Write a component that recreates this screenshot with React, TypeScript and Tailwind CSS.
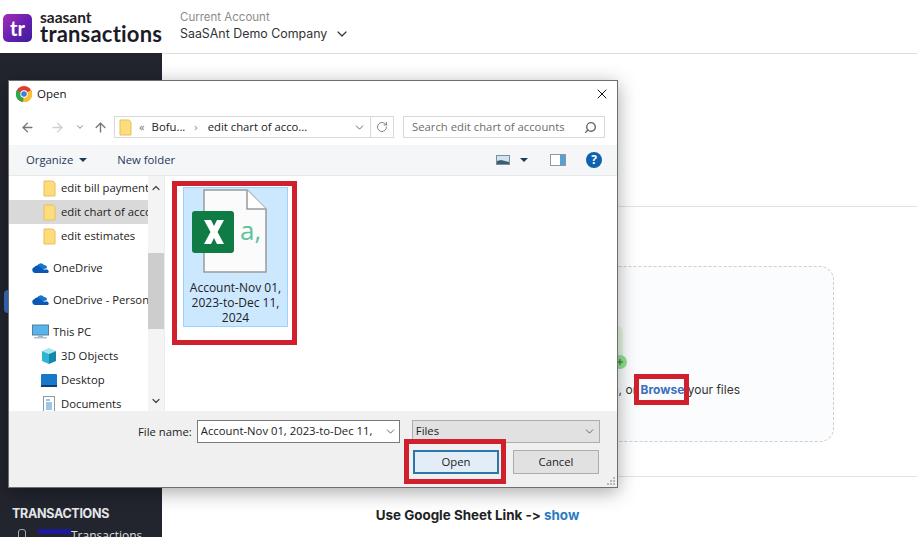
import { ChevronDown, ChevronUp, ArrowLeft, ArrowRight, ArrowUp, RotateCw, Search, X } from "lucide-react"

const font = "[font-family:'Open_Sans','Noto_Sans',sans-serif]"

function Folder() {
	return (
		<svg width="13" height="17" viewBox="0 0 13 17" className="shrink-0">
			<path d="M1 1h9l2 2v13H1z" fill="#fddc7c" stroke="#e8c05a" strokeWidth="1" />
		</svg>
	)
}

function Cloud() {
	return (
		<svg width="17" height="12" viewBox="0 0 17 12" className="shrink-0">
			<path d="M5 4a4 4 0 0 1 7-1 3 3 0 0 1 3 3l-6 2z" fill="#0f78d4" />
			<path d="M3 11a3 3 0 0 1-.5-5.900a3 3 0 0 1 5-.6l4 3h3a2 2 0 0 1 1.500 3.500z" fill="#0a58b0" />
		</svg>
	)
}

function PcIcon() {
	return (
		<svg width="17" height="16" viewBox="0 0 17 16" className="shrink-0">
			<rect x="0.500" y="1" width="16" height="10" fill="#58b4ec" stroke="#5c7c94" />
			<rect x="6" y="11" width="5" height="2" fill="#9fb4c4" />
			<rect x="2" y="13" width="13" height="1.500" fill="#b4c0ca" />
		</svg>
	)
}

function CubeIcon() {
	return (
		<svg width="16" height="16" viewBox="0 0 16 16" className="shrink-0">
			<path d="M8 0l7 3-7 3-7-3z" fill="#a6e4f2" />
			<path d="M1 3l7 3v10l-7-3z" fill="#2fb4d4" />
			<path d="M15 3l-7 3v10l7-3z" fill="#1587a8" />
		</svg>
	)
}

function DesktopIcon() {
	return (
		<svg width="16" height="13" viewBox="0 0 16 13" className="shrink-0">
			<rect width="16" height="13" rx="1" fill="#1979c9" />
			<rect y="11" width="16" height="2" fill="#0e3f73" />
		</svg>
	)
}

function DocsIcon() {
	return (
		<svg width="12" height="16" viewBox="0 0 12 16" className="shrink-0">
			<rect x="0.500" y="0.500" width="11" height="15" fill="#fff" stroke="#8a9aa8" />
			<path d="M3 4h4M3 7h6M3 9h6M3 11h6M3 13h6" stroke="#3f8fc9" />
		</svg>
	)
}

function ChromeIcon() {
	return (
		<svg width="16" height="16" viewBox="0 0 16 16" className="shrink-0">
			<circle cx="8" cy="8" r="8" fill="#e33b2e" />
			<path d="M8 8L1 4a8 8 0 0 0 6 12z" fill="#2fa84f" />
			<path d="M8 8l7-4a8 8 0 0 1-8 12z" fill="#fbc02d" />
			<circle cx="8" cy="8" r="3.700" fill="#fff" />
			<circle cx="8" cy="8" r="2.800" fill="#3f7fe0" />
		</svg>
	)
}

function FileTile() {
	return (
		<div className="w-[105px] h-[140px] bg-[#cce8ff] border border-[#99d1ff] flex flex-col items-center relative">
			<svg width="103" height="90" viewBox="0 0 103 90" className="mt-[1px] shrink-0">
				<path d="M20 1h43l19 19v63H20z" fill="#fbfbfb" stroke="#9a9a9a" strokeWidth="1.500" />
				<path d="M63 1v19h19" fill="#fff" stroke="#9a9a9a" strokeWidth="1.500" />
				<rect x="8" y="22" width="42" height="42" rx="3" fill="#107c45" />
				<path d="M20 31h7l3 6 3-6h7l-6.500 12L40 55h-7l-3-6-3 6h-7l6.500-12z" fill="#fff" />
				<text x="56" y="51" fontSize="26" fill="#5fc29c" fontFamily="Open Sans, sans-serif">a,</text>
			</svg>
			<div className="text-[12px] leading-[15px] text-center text-[#222] mt-[1px] whitespace-nowrap">
				Account-Nov 01,
				<br />
				2023-to-Dec 11,
				<br />
				2024
			</div>
		</div>
	)
}

function TreeRow({ icon, label, indent, selected, className }: { icon: React.ReactNode; label: string; indent: string; selected?: boolean; className?: string }) {
	return (
		<div className={`h-6 flex items-center whitespace-nowrap overflow-hidden text-[11.300px] text-[#222] ${indent} ${selected ? "bg-[#d9d9d9]" : ""} ${className ?? ""}`}>
			{icon}
			<span>{label}</span>
		</div>
	)
}

function OpenDialog() {
	return (
		<div className={`absolute left-[8px] top-[80px] w-[610px] h-[408px] bg-white border border-[#6e6e6e] shadow-[0_4px_18px_rgba(0,0,0,0.35)] flex flex-col ${font}`}>
			<div className="h-[26px] flex items-center pl-[7px] pr-[7px] shrink-0 text-[11.500px] text-[#111]">
				<ChromeIcon />
				<span className="ml-[5px]">Open</span>
				<X className="ml-auto w-[16px] h-[16px] text-black" strokeWidth={1.4} />
			</div>
			<div className="h-[22px] mt-[9px] flex items-center shrink-0 text-[11.300px] text-[#222]">
				<ArrowLeft className="ml-[11px] w-[15px] h-[15px] text-[#757575]" strokeWidth={2.2} />
				<ArrowRight className="ml-[15px] w-[15px] h-[15px] text-[#cfcfcf]" strokeWidth={2.2} />
				<ChevronDown className="ml-[10px] w-[10px] h-[10px] text-[#999]" strokeWidth={2.5} />
				<ArrowUp className="ml-[8px] w-[15px] h-[15px] text-[#757575]" strokeWidth={2.2} />
				<div className="ml-[6px] w-[257px] h-[22px] border border-[#d9d9d9] flex items-center pl-[4px]">
					<Folder />
					<span className="ml-[7px] text-[#777]">«</span>
					<span className="ml-[7px]">Bofu...</span>
					<span className="ml-[9px] text-[#888] text-[11px]">›</span>
					<span className="ml-[10px]">edit chart of acco...</span>
					<ChevronDown className="ml-auto mr-[4px] w-[13px] h-[13px] text-[#555]" strokeWidth={1.6} />
				</div>
				<div className="w-[23px] h-[22px] border border-l-0 border-[#d9d9d9] flex items-center justify-center">
					<RotateCw className="w-[12px] h-[12px] text-[#777]" strokeWidth={1.8} />
				</div>
				<div className="ml-[9px] w-[202px] h-[22px] border border-[#d9d9d9] flex items-center pl-[8px] text-[#6d6d6d]">
					<span>Search edit chart of accounts</span>
					<Search className="ml-auto mr-[7px] w-[13px] h-[13px] -scale-x-100 text-[#666]" strokeWidth={2.6} />
				</div>
			</div>
			<div className="h-[31px] mt-[7px] bg-[#f5f6f7] border-b border-[#e8e8e8] flex items-center shrink-0 text-[11.300px] text-[#1e395b]">
				<span className="ml-[17px]">Organize</span>
				<span className="ml-[6px] w-0 h-0 border-x-[4px] border-x-transparent border-t-[4px] border-t-[#1e395b]" />
				<span className="ml-[30px]">New folder</span>
				<div className="ml-auto pr-[15px] flex items-center">
					<svg width="14" height="10" viewBox="0 0 14 10">
						<rect x="0.500" y="0.500" width="13" height="9" fill="#cfe4f2" stroke="#7d8d99" />
						<path d="M1 9V6l4-1 8 2v2z" fill="#3f5d70" />
					</svg>
					<span className="ml-[10px] w-0 h-0 border-x-[4px] border-x-transparent border-t-[4px] border-t-[#1e395b]" />
					<svg width="16" height="12" viewBox="0 0 16 12" className="ml-[22px]">
						<rect x="0.500" y="0.500" width="15" height="11" fill="#fff" stroke="#8d99a3" />
						<rect x="10" y="1" width="5" height="10" fill="#5aa0d0" />
					</svg>
					<div className="ml-[20px] w-[16px] h-[16px] rounded-full bg-[#0f62ae] text-white text-[12px] font-bold flex items-center justify-center">?</div>
				</div>
			</div>
			<div className="h-[235px] flex shrink-0 overflow-hidden">
				<div className="w-[139px] shrink-0 overflow-hidden">
					<TreeRow icon={<Folder />} label="edit bill payment" indent="pl-[34px] gap-[5px]" />
					<TreeRow icon={<Folder />} label="edit chart of accounts" indent="pl-[34px] gap-[5px]" selected />
					<TreeRow icon={<Folder />} label="edit estimates" indent="pl-[34px] gap-[5px]" />
					<TreeRow icon={<Cloud />} label="OneDrive" indent="pl-[23px] gap-[4px]" className="mt-[8px]" />
					<TreeRow icon={<Cloud />} label="OneDrive - Personal" indent="pl-[23px] gap-[4px]" className="mt-[8px]" />
					<TreeRow icon={<PcIcon />} label="This PC" indent="pl-[23px] gap-[4px]" className="mt-[8px]" />
					<TreeRow icon={<CubeIcon />} label="3D Objects" indent="pl-[32px] gap-[4px]" />
					<TreeRow icon={<DesktopIcon />} label="Desktop" indent="pl-[32px] gap-[4px]" />
					<TreeRow icon={<DocsIcon />} label="Documents" indent="pl-[34px] gap-[6px]" />
				</div>
				<div className="w-[16px] shrink-0 bg-[#f4f4f4] flex flex-col items-center">
					<ChevronUp className="mt-[6px] w-[12px] h-[12px] text-[#444]" strokeWidth={2.4} />
					<div className="mt-[59px] w-full h-[76px] bg-[#cdcdcd]" />
					<ChevronDown className="mt-[66px] w-[12px] h-[12px] text-[#444]" strokeWidth={2.4} />
				</div>
				<div className="flex-1 border-l border-[#ececec] pl-[18px] pt-[11px]">
					<FileTile />
				</div>
			</div>
			<div className="flex-1 bg-[#f0f0f0] relative text-[11.300px] text-[#222]">
				<div className="flex items-start mt-[9px] h-[23px]">
					<span className="ml-[129px] mt-[4px]">File name:</span>
					<div className="ml-[5px] w-[203px] h-[23px] bg-white border border-[#7a7a7a] flex items-center pl-[3px] overflow-hidden whitespace-nowrap">
						<span className="w-[180px] overflow-hidden">Account-Nov 01, 2023-to-Dec 11,</span>
						<ChevronDown className="ml-auto mr-[2px] w-[13px] h-[13px] text-[#555]" strokeWidth={1.6} />
					</div>
					<div className="ml-[12px] w-[188px] h-[23px] bg-[#e1e1e1] border border-[#adadad] flex items-center pl-[3px]">
						<span>Files</span>
						<ChevronDown className="ml-auto mr-[3px] w-[13px] h-[13px] text-[#555]" strokeWidth={1.6} />
					</div>
				</div>
				<div className="flex mt-[7px]">
					<div className="ml-[404px] w-[86px] h-[24px] bg-[#e2edf7] border-2 border-[#2a78a8] flex items-center justify-center">Open</div>
					<div className="ml-[14px] w-[86px] h-[24px] bg-[#e1e1e1] border border-[#adadad] flex items-center justify-center">Cancel</div>
				</div>
				<svg width="10" height="10" viewBox="0 0 10 10" className="absolute right-[1px] bottom-[1px]">
					<path d="M7 1h2v2H7zM4 4h2v2H4zM7 4h2v2H7zM1 7h2v2H1zM4 7h2v2H4zM7 7h2v2H7z" fill="#b9b9b9" />
				</svg>
			</div>
		</div>
	)
}

export default function App() {
	return (
		<div className={`relative w-[917px] h-[537px] overflow-hidden bg-white ${font}`}>
			<header className="h-[53px] flex items-start">
				<div className="w-[163px] h-[53px] shrink-0 flex items-center pl-[3px]">
					<div className="w-[29px] h-[28px] mt-[2px] rounded-[5px] bg-gradient-to-br from-[#a52bb5] via-[#6a1fb0] to-[#3d1a9c] flex items-center justify-center text-white font-bold text-[20px] leading-none [font-family:'Lato',sans-serif]">
						tr
					</div>
					<div className="ml-[8px] flex flex-col mt-[3px]">
						<span className="text-[15.500px] leading-[11px] font-bold text-[#222] [font-family:'Lato',sans-serif]">saasant</span>
						<span className="text-[22px] leading-[21px] font-bold text-[#1c1c28] tracking-[0.2px] [font-family:'Lato',sans-serif]">transactions</span>
					</div>
				</div>
				<div className="flex-1 h-[54px] border-b border-[#dedede] pl-[17px] pt-[10px] [font-family:'Inter',sans-serif]">
					<div className="text-[11.500px] leading-[15px] text-[#8b8b8b]">Current Account</div>
					<div className="flex items-center text-[12.400px] leading-[18px] text-[#333]">
						SaaSAnt Demo Company
						<ChevronDown className="ml-[7px] w-[16px] h-[16px] text-[#333]" strokeWidth={1.8} />
					</div>
				</div>
			</header>
			<div className="flex h-[484px]">
				<aside className="w-[162px] shrink-0 bg-[#22252e] flex flex-col pl-[12px] relative">
					<div className="absolute left-[4px] top-[237px] w-[4px] h-[23px] rounded-l bg-[#3a6fc4]" />
					<div className="mt-[453px] text-[12.500px] font-bold leading-[15px] text-[#e6e7ea] tracking-[-0.3px] [font-family:'Inter',sans-serif]">TRANSACTIONS</div>
					<div className="mt-[8px] flex items-start text-[12px] text-[#ddd] leading-[14px]">
						<span className="ml-[6px] w-[8px] h-[10px] border border-[#aaa] rounded-t-[3px]" />
						<span className="ml-[12px] w-[33px] h-[5px] bg-[#1a1a9a]" />
						<span>Transactions</span>
					</div>
				</aside>
				<main className="flex-1 flex flex-col">
					<div className="h-[154px] border-b border-[#e2e2e2] shrink-0" />
					<div className="mt-[59px] ml-[77px] mr-[83px] h-[176px] shrink-0 rounded-[14px] border border-dashed border-[#cfcfcf] bg-[#fbfcfd] flex flex-col items-end pt-[58px]">
						<svg width="40" height="46" viewBox="0 0 40 46" className="mr-[200px]">
							<rect x="0" y="0" width="30" height="38" rx="8" fill="#e6f6e2" />
							<circle cx="27" cy="37" r="7" fill="#8fe28f" />
							<path d="M27 34v6M24 37h6" stroke="#2c6a2c" strokeWidth="1" />
						</svg>
						<div className="mt-[11px] mr-[93px] text-[12px] leading-[16px] text-[#333] whitespace-nowrap [font-family:'Inter',sans-serif]">
							Drag &amp; drop your file here, or <span className="font-bold text-[#3b6fbe]">Browse</span> your files
						</div>
					</div>
					<div className="mt-[34px] border-t border-[#e2e2e2] pr-[124px] pt-[28px] flex justify-center text-[13.400px] font-bold text-[#222] whitespace-nowrap [font-family:'Inter',sans-serif] [font-feature-settings:'calt'_0]">
						Use Google Sheet Link -&gt;&nbsp;<span className="text-[#2b7cc4]">show</span>
					</div>
				</main>
			</div>
			<OpenDialog />
			<div className="absolute left-[172px] top-[181px] w-[125px] h-[164px] border-[5px] border-[#d0202e]" />
			<div className="absolute left-[404px] top-[439px] w-[102px] h-[45px] border-[5px] border-[#d0202e]" />
			<div className="absolute left-[634px] top-[374px] w-[55px] h-[31px] border-[5px] border-[#d0202e]" />
		</div>
	)
}
